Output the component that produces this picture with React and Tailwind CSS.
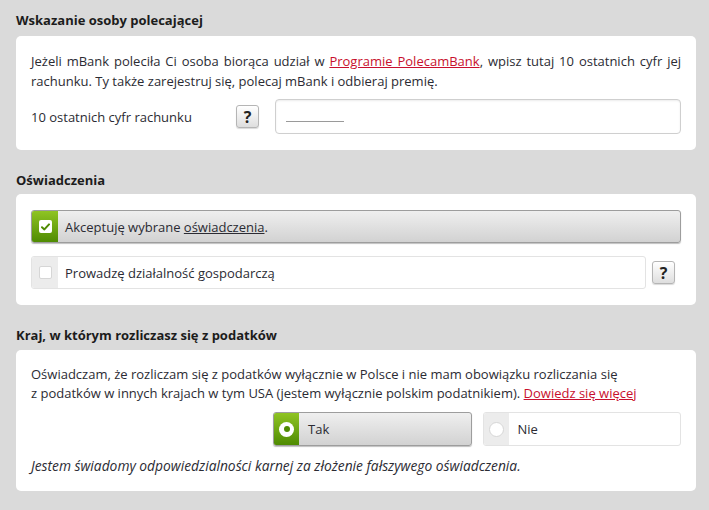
const green = "bg-[linear-gradient(to_bottom,#8fc423,#4f8b02)]";

function HelpButton({ className = "" }) {
  return (
    <button
      type="button"
      className={`flex h-[23px] w-[23px] shrink-0 items-center justify-center rounded-[3px] border border-[#b5b5b5] bg-[linear-gradient(to_bottom,#ffffff,#dedede)] text-[16px] font-bold leading-none text-[#222] shadow-[0_1px_1px_rgba(0,0,0,0.15)] ${className}`}
    >
      ?
    </button>
  );
}

function CheckRow({ checked, children, className = "" }) {
  return (
    <div
      className={`flex h-[33px] items-stretch overflow-hidden rounded-[3px] ${
        checked
          ? "border border-[#9d9d9d] bg-[linear-gradient(to_bottom,#efefef,#d2d2d2)] shadow-[0_1px_1px_rgba(0,0,0,0.25)]"
          : "border border-[#e3e3e3] bg-white"
      } ${className}`}
    >
      <div
        className={`flex w-[26px] shrink-0 items-center justify-center ${
          checked ? green : "bg-[#ececec]"
        }`}
      >
        <span
          className={`flex h-[13px] w-[13px] items-center justify-center rounded-[2px] bg-white ${
            checked ? "" : "border border-[#d6d6d6]"
          }`}
        >
          {checked && (
            <svg width="9" height="8" viewBox="0 0 9 8">
              <path
                d="M1 4.2 L3.4 6.4 L8 1.4"
                fill="none"
                stroke="#4f8b02"
                strokeWidth="2"
                strokeLinecap="round"
                strokeLinejoin="round"
              />
            </svg>
          )}
        </span>
      </div>
      <div className="flex items-center pl-[7px]">{children}</div>
    </div>
  );
}

function RadioBox({ checked, label }) {
  return (
    <div
      className={`flex h-[34px] flex-1 items-stretch overflow-hidden rounded-[3px] ${
        checked
          ? "border border-[#9d9d9d] bg-[linear-gradient(to_bottom,#efefef,#d2d2d2)] shadow-[0_1px_1px_rgba(0,0,0,0.25)]"
          : "border border-[#e3e3e3] bg-white"
      }`}
    >
      <div
        className={`flex w-[25px] shrink-0 items-center justify-center ${
          checked ? green : "bg-[#ececec]"
        }`}
      >
        <span
          className={`flex h-[15px] w-[15px] items-center justify-center rounded-full bg-white ${
            checked ? "" : "border border-[#d6d6d6]"
          }`}
        >
          {checked && <span className="h-[6px] w-[6px] rounded-full bg-[#4f8b02]" />}
        </span>
      </div>
      <div className="flex items-center pl-[9px]">{label}</div>
    </div>
  );
}

export default function App() {
  return (
    <div className="min-h-[510px] bg-[#dadada] pl-4 pr-[13px] pt-[10px] font-['Open_Sans',sans-serif] text-[13px] leading-[20px] text-[#2b2b33]">
      <h2 className="mb-[6px] text-[13px] font-bold leading-[20px] text-[#1c1c1c]">
        Wskazanie osoby polecającej
      </h2>
      <div className="rounded-[5px] bg-white px-[15px] pb-[16px] pt-[15px]">
        <p className="text-justify">
          Jeżeli mBank poleciła Ci osoba biorąca udział w{" "}
          <a href="#" className="text-[#c8102e] underline">
            Programie PolecamBank
          </a>
          , wpisz tutaj 10 ostatnich cyfr jej rachunku. Ty także zarejestruj się, polecaj mBank i odbieraj premię.
        </p>
        <div className="mt-[8px] flex items-center">
          <span className="w-[205px] shrink-0">10 ostatnich cyfr rachunku</span>
          <HelpButton />
          <div className="ml-[16px] flex h-[35px] flex-1 items-center rounded-[4px] border border-[#cfcfcf] px-[10px] shadow-[inset_0_1px_2px_rgba(0,0,0,0.08)]">
            <span className="mt-[10px] block h-px w-[58px] bg-[#9a9a9a]" />
          </div>
        </div>
      </div>

      <h2 className="mb-[4px] mt-5 text-[13px] font-bold leading-[20px] text-[#1c1c1c]">
        Oświadczenia
      </h2>
      <div className="rounded-[5px] bg-white px-[15px] pb-[16px] pt-[16px]">
        <CheckRow checked>
          <span>
            Akceptuję wybrane{" "}
            <a href="#" className="text-[#2b2b33] underline">
              oświadczenia
            </a>
            .
          </span>
        </CheckRow>
        <div className="mt-[13px] flex items-center">
          <CheckRow className="flex-1">
            <span>Prowadzę działalność gospodarczą</span>
          </CheckRow>
          <HelpButton className="ml-[6px] mr-[6px]" />
        </div>
      </div>

      <h2 className="mb-[5px] mt-5 text-[13px] font-bold leading-[20px] text-[#1c1c1c]">
        Kraj, w którym rozliczasz się z podatków
      </h2>
      <div className="rounded-[5px] bg-white px-[15px] pb-[15px] pt-[15px]">
        <p className="leading-[19px]">
          Oświadczam, że rozliczam się z podatków wyłącznie w Polsce i nie mam obowiązku rozliczania się
          <br />
          z podatków w innych krajach w tym USA (jestem wyłącznie polskim podatnikiem).{" "}
          <a href="#" className="text-[#c8102e] underline">
            Dowiedz się więcej
          </a>
        </p>
        <div className="ml-[242px] mt-[9px] flex gap-[11px]">
          <RadioBox checked label="Tak" />
          <RadioBox label="Nie" />
        </div>
        <p className="mt-[10px] text-[13.8px] italic">
          Jestem świadomy odpowiedzialności karnej za złożenie fałszywego oświadczenia.
        </p>
      </div>
    </div>
  );
}
